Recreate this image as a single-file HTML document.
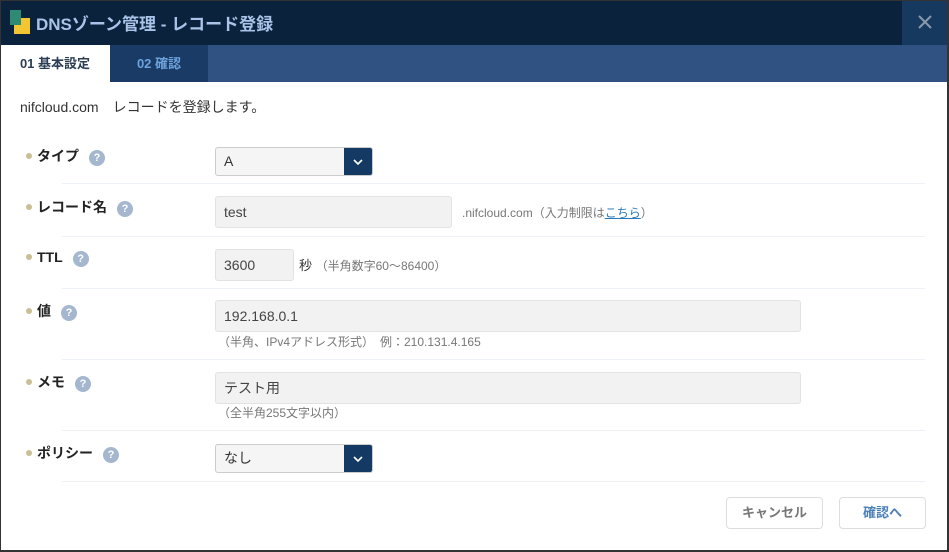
<!DOCTYPE html><html><head><meta charset="utf-8"><style>
*{box-sizing:border-box;margin:0;padding:0}
body{width:949px;height:552px;background:#fff;font-family:"Liberation Sans","Noto Sans CJK JP",sans-serif;position:relative;overflow:hidden}
.frame{position:absolute;left:0;top:0;width:949px;height:552px;border:1px solid #333;border-right:2px solid #333;border-bottom:2px solid #333;pointer-events:none}
.a{position:absolute}
.hdr{left:0;top:0;width:949px;height:45px;background:#0b223d}
.ttl{left:36px;top:10px;color:#a9c4e8;font-size:17px;font-weight:bold}
.cls{left:902px;top:0;width:46px;height:45px;background:#15395f}
.tabs{left:0;top:45px;width:949px;height:37px;background:#2f5283}
.t1{left:0;top:45px;width:110px;height:37px;background:#fff;color:#2c3e55;font-size:13px;font-weight:bold;text-align:center;line-height:37px}
.t2{left:110px;top:45px;width:98px;height:37px;background:#1a3b66;color:#6fa3dd;font-size:13px;font-weight:bold;text-align:center;line-height:37px}
.intro{left:20px;top:97px;font-size:14px;color:#333}
.lab{left:26px;font-size:14px;font-weight:bold;color:#222}
.lab:before{content:"";display:inline-block;width:6px;height:6px;border-radius:3px;background:#c8bf95;margin-right:5px;vertical-align:2px}
.q{display:inline-block;width:16px;height:16px;border-radius:8px;background:#a4b7cf;color:#fff;font-size:11px;text-align:center;line-height:16px;margin-left:10px;vertical-align:0}
.sep{left:62px;width:863px;height:1px;background:#eef2f6}
.in{background:#f2f2f2;border:1px solid #e2e2e2;border-radius:3px;font-size:14px;color:#444;padding-left:8px;line-height:30px;height:32px}
.sel{background:#f5f5f5;border:1px solid #ccc;border-radius:3px;width:158px;height:29px;font-size:14px;color:#333;padding-left:8px;line-height:27px;overflow:hidden}
.sel i{position:absolute;right:0;top:0;width:28px;height:27px;background:#143a63}
.sm{font-size:12px;color:#777}
.btn{top:497px;height:32px;border:1px solid #ddd;border-radius:4px;background:#fff;font-size:13px;font-weight:bold;text-align:center;line-height:30px}
</style></head><body>
<div class="a hdr"></div>
<svg class="a" style="left:10px;top:10px" width="22" height="24"><rect x="0" y="0" width="11" height="15" fill="#2e8a73"/><path d="M11 8h9v16h-16v-9h7z" fill="#f2c533"/></svg>
<div class="a ttl">DNSゾーン管理 - レコード登録</div>
<div class="a cls"><svg width="46" height="45"><path d="M17 16l12 12M29 16l-12 12" stroke="#8a99aa" stroke-width="2"/></svg></div>
<div class="a tabs"></div>
<div class="a t1">01 基本設定</div>
<div class="a t2">02 確認</div>
<div class="a intro">nifcloud.com　レコードを登録します。</div>

<div class="a lab" style="top:146px">タイプ<span class="q">?</span></div>
<div class="a sel" style="left:215px;top:147px">A<i><svg width="28" height="27"><path d="M10 12l4 4 4-4" stroke="#fff" stroke-width="1.6" fill="none"/></svg></i></div>
<div class="a sep" style="top:183px"></div>

<div class="a lab" style="top:197px">レコード名<span class="q">?</span></div>
<div class="a in" style="left:215px;top:196px;width:237px">test</div>
<div class="a sm" style="left:462px;top:204px">.nifcloud.com（入力制限は<span style="color:#2a7ab8;text-decoration:underline">こちら</span>）</div>
<div class="a sep" style="top:236px"></div>

<div class="a lab" style="top:249px">TTL<span class="q">?</span></div>
<div class="a in" style="left:215px;top:249px;width:79px">3600</div>
<div class="a" style="left:299px;top:255px;font-size:13px;color:#333">秒 <span class="sm">（半角数字60～86400）</span></div>
<div class="a sep" style="top:288px"></div>

<div class="a lab" style="top:301px">値<span class="q">?</span></div>
<div class="a in" style="left:215px;top:300px;width:586px">192.168.0.1</div>
<div class="a sm" style="left:218px;top:333px">（半角、IPv4アドレス形式）　例：210.131.4.165</div>
<div class="a sep" style="top:359px"></div>

<div class="a lab" style="top:372px">メモ<span class="q">?</span></div>
<div class="a in" style="left:215px;top:372px;width:586px">テスト用</div>
<div class="a sm" style="left:218px;top:404px">（全半角255文字以内）</div>
<div class="a sep" style="top:430px"></div>

<div class="a lab" style="top:443px">ポリシー<span class="q">?</span></div>
<div class="a sel" style="left:215px;top:444px">なし<i><svg width="28" height="27"><path d="M10 12l4 4 4-4" stroke="#fff" stroke-width="1.6" fill="none"/></svg></i></div>
<div class="a sep" style="top:481px"></div>

<div class="a btn" style="left:726px;width:97px;color:#777">キャンセル</div>
<div class="a btn" style="left:839px;width:87px;color:#4a7fb8">確認へ</div>
<div class="frame"></div>
</body></html>
